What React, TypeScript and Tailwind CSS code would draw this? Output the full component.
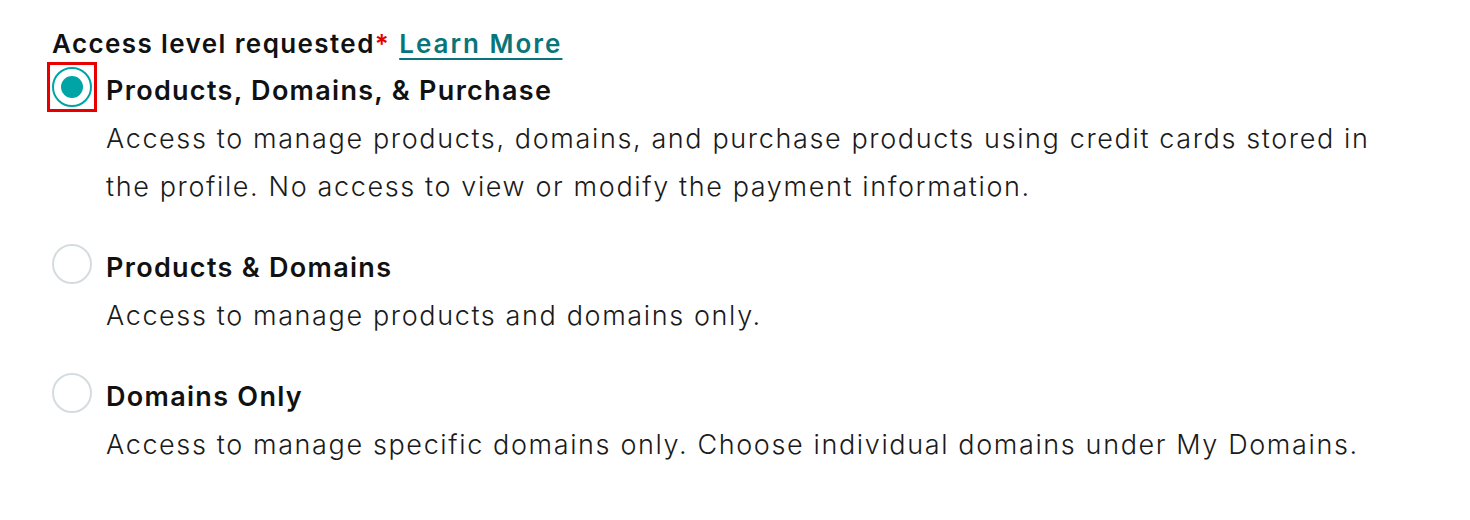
const FONT = { fontFamily: 'Inter, "Noto Sans", sans-serif' };

type Option = { id: string; title: string; desc: string[] };

const OPTIONS: Option[] = [
  {
    id: "purchase",
    title: "Products, Domains, & Purchase",
    desc: [
      "Access to manage products, domains, and purchase products using credit cards stored in",
      "the profile. No access to view or modify the payment information.",
    ],
  },
  {
    id: "products",
    title: "Products & Domains",
    desc: ["Access to manage products and domains only."],
  },
  {
    id: "domains",
    title: "Domains Only",
    desc: ["Access to manage specific domains only. Choose individual domains under My Domains."],
  },
];

function Radio({ checked }: { checked: boolean }) {
  if (checked) {
    // focus ring around the selected radio
    return (
      <span className="-mt-[5px] -ml-[5px] flex h-[50px] w-[50px] shrink-0 items-center justify-center border-[3px] border-[#e80000]">
        <span className="flex h-[40px] w-[40px] items-center justify-center rounded-full border-[2px] border-[#00a4a6] bg-white">
          <span className="h-[22px] w-[22px] rounded-full bg-[#00a4a6]" />
        </span>
      </span>
    );
  }
  return <span className="h-[40px] w-[40px] shrink-0 rounded-full border-[2px] border-[#d5dce0] bg-white" />;
}

export default function App() {
  return (
    <div className="min-h-[520px] w-full bg-white pl-[52px] pt-[26px] text-[#111]" style={FONT}>
      <div className="flex items-baseline text-[26px] font-semibold leading-[36px] tracking-[1.4px]">
        <span>Access level requested</span>
        <span className="text-[#e20000]">*</span>
        <a
          href="#"
          className="ml-[9px] tracking-[2px] text-[#09757a] underline decoration-[2px] underline-offset-[5px]"
        >
          Learn More
        </a>
      </div>
      <div className="flex flex-col gap-[33px] pt-[5px]">
        {OPTIONS.map((o, i) => (
          <div key={o.id} className="flex items-start">
            <div className="flex w-[54px] shrink-0">
              <Radio checked={i === 0} />
            </div>
            <div className="flex flex-col">
              <div className="text-[27px] font-semibold leading-[48px] tracking-[1.3px]">{o.title}</div>
              {o.desc.map((d) => (
                <div key={d} className="text-[27px] font-light leading-[48px] tracking-[1.62px] text-[#1a1a1a]">
                  {d}
                </div>
              ))}
            </div>
          </div>
        ))}
      </div>
    </div>
  );
}
